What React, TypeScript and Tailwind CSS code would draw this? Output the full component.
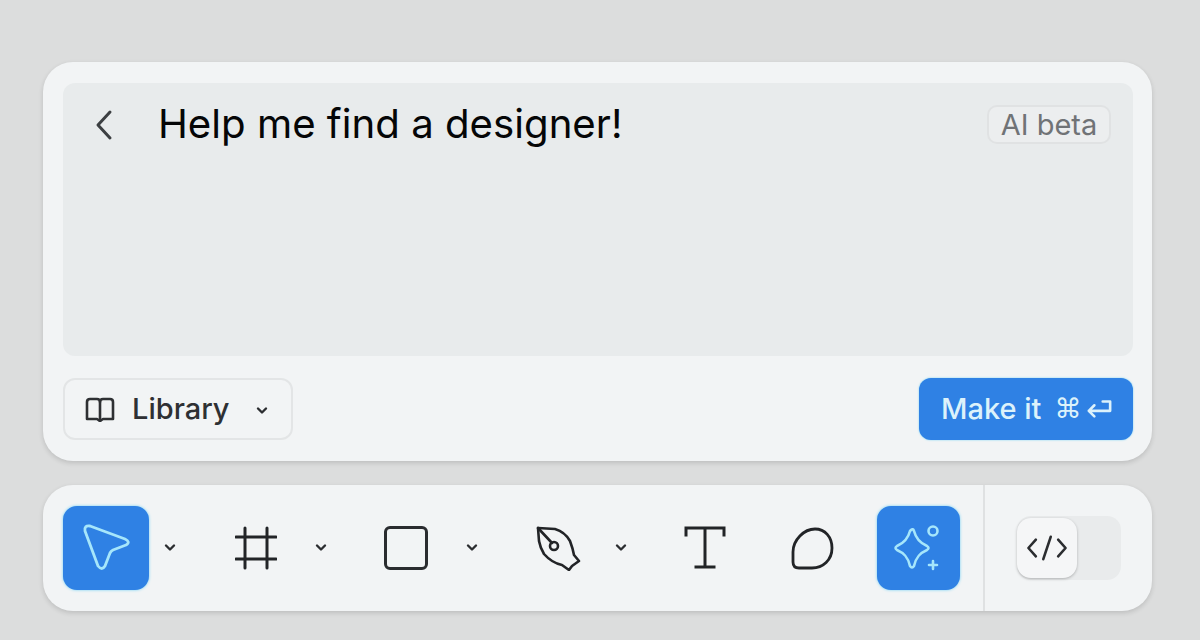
import React from "react";

const Chevron = ({ className = "" }: { className?: string }) => (
  <svg viewBox="0 0 16 12" className={`w-4 h-3 ${className}`} fill="none" stroke="#2b2d30" strokeWidth="2.4" strokeLinecap="round" strokeLinejoin="round">
    <path d="M4 3.5 L8 7.5 L12 3.5" />
  </svg>
);

export default function App() {
  return (
    <div className="w-[1200px] h-[640px] overflow-hidden bg-[#dcdddd] pt-[62px] pl-[43px] font-['Inter','Liberation_Sans',sans-serif]">
      <div className="w-[1109px] h-[399px] rounded-[30px] bg-[#f2f4f5] pl-5 pr-[19px] pt-[21px] flex flex-col shadow-[0_2px_5px_rgba(0,0,0,0.14)]">
        <div className="h-[273px] rounded-[12px] bg-[#e8ebec] flex items-start pl-[31px] pr-[22px] pt-[14px]">
          <svg viewBox="0 0 20 36" className="w-5 h-9 mt-[10px] shrink-0" fill="none" stroke="#3c3f42" strokeWidth="3" strokeLinecap="round" strokeLinejoin="round">
            <path d="M16 5 L4 18 L16 31" />
          </svg>
          <div className="ml-[44px] text-[40.2px] leading-[52px] text-[#050607] h-[52px] mt-[1px]">Help me find a designer!</div>
          <div className="ml-auto mt-[8px] w-[124px] h-[39px] rounded-[10px] border-2 border-[#e0e2e3] bg-[#eceeef] flex items-center justify-center text-[29px] text-[#707376]">AI beta</div>
        </div>
        <div className="mt-[22px] flex justify-between">
          <div className="w-[230px] h-[62px] rounded-[12px] border-2 border-[#e3e5e6] flex items-center pl-[19px]">
            <svg viewBox="0 0 32 26" className="w-[32px] h-[26px] shrink-0" fill="none" stroke="#2e3033" strokeWidth="2.6" strokeLinejoin="round" strokeLinecap="round">
              <path d="M16 6 Q16 3 13 3 H6 Q3 3 3 6 V23 H13 L16 25 L19 23 H29 V6 Q29 3 26 3 H19 Q16 3 16 6 Z" />
              <path d="M16 6 V25" />
            </svg>
            <span className="ml-[16px] text-[29px] font-medium text-[#2e3033]">Library</span>
            <Chevron className="ml-[24px] mt-[3px]" />
          </div>
          <div className="w-[214px] h-[62px] rounded-[12px] bg-[#2f81e4] shadow-[0_0_2px_#6fd0f5] flex items-center pl-[22px]">
            <span className="text-[29px] font-medium text-[#dcf2fb]">Make it</span>
            <span className="ml-[13px] text-[27px] text-[#dcf2fb] font-['DejaVu_Sans',sans-serif]">⌘</span>
            <svg viewBox="0 0 28 22" className="w-[26px] h-[22px] ml-[5px]" fill="none" stroke="#dcf2fb" strokeWidth="2.8" strokeLinecap="round" strokeLinejoin="round">
              <path d="M18 3 H26 V13 H3 M9 7 L3 13 L9 19" />
            </svg>
          </div>
        </div>
      </div>

      <div className="mt-6 w-[1109px] h-[126px] rounded-[30px] bg-[#f2f4f5] flex items-center pl-5 shadow-[0_2px_5px_rgba(0,0,0,0.14)]">
        <div className="w-[86px] h-[84px] rounded-[14px] bg-[#2f81e4] shadow-[0_0_3px_#6fd0f5] flex items-center justify-center shrink-0">
          <svg viewBox="0 0 50 50" className="w-[50px] h-[50px]" fill="none" stroke="#a6e6fb" strokeWidth="2.8" strokeLinejoin="round">
            <path d="M4 8 Q3 2 9 3 L44 16 Q50 19 45 22 L32 27 Q30 28 29 30 L24 43 Q21 48 17 43 Z" />
          </svg>
        </div>
        <Chevron className="ml-[13px] shrink-0" />

        <svg viewBox="0 0 42 44" className="w-[42px] h-[44px] ml-[57px] shrink-0" fill="none" stroke="#222427" strokeWidth="3" strokeLinecap="round">
          <path d="M10 2 V42 M32 2 V42 M1 11 H41 M1 33 H41" />
        </svg>
        <Chevron className="ml-[36px] shrink-0" />

        <div className="ml-[55px] w-[44px] h-[44px] rounded-[6px] border-[3px] border-[#2a2c2f] shrink-0" />
        <Chevron className="ml-[36px] shrink-0" />

        <svg viewBox="0 0 46 46" className="w-[46px] h-[46px] ml-[55px] shrink-0" fill="none" stroke="#222427" strokeWidth="2.6" strokeLinejoin="round" strokeLinecap="round">
          <path d="M3 3 L20 4 Q30 7 35 16 Q38 24 39 30 L44 36 L37 41 L34 45 L27 40 Q17 38 9 29 Q5 22 4 16 Z" />
          <path d="M3 3 L17 18" />
          <circle cx="19" cy="21" r="4" />
        </svg>
        <Chevron className="ml-[32px] shrink-0" />

        <svg viewBox="0 0 42 44" className="w-[42px] h-[44px] ml-[55px] shrink-0" fill="none" stroke="#222427" strokeWidth="3" strokeLinecap="square">
          <path d="M2 9 V2 H40 V9 M21 2 V41 M12 41 H30" />
        </svg>

        <svg viewBox="0 0 44 44" className="w-[44px] h-[44px] ml-[64px] shrink-0" fill="none" stroke="#222427" strokeWidth="2.8" strokeLinejoin="round">
          <path d="M25 3 C35 3 42 11 42 22 C42 34 33 42 22 42 H9 Q3 42 3 36 V26 C3 14 14 3 25 3 Z" />
        </svg>

        <div className="ml-[43px] w-[83px] h-[84px] rounded-[14px] bg-[#2f81e4] shadow-[0_0_3px_#6fd0f5] flex items-center justify-center shrink-0">
          <svg viewBox="0 0 50 50" className="w-[50px] h-[50px]" fill="none" stroke="#a6e6fb" strokeWidth="2.6" strokeLinejoin="round" strokeLinecap="round">
            <path d="M17 7 Q19 5 20 8 C22 16 26 20 33 23 Q36 25 33 27 C26 30 22 34 20 43 Q18 46 16 43 C14 34 10 30 3 27 Q0 25 3 23 C10 20 14 16 16 8 Z" />
            <circle cx="39" cy="8" r="4.5" />
            <path d="M39 38 V46 M35 42 H43" />
          </svg>
        </div>

        <div className="ml-[23px] w-[2px] h-full bg-[#dfe1e2] shrink-0" />

        <div className="ml-[32px] w-[104px] h-[64px] rounded-[14px] bg-[#e9ebec] shrink-0 flex items-center">
          <div className="w-[60px] h-[60px] rounded-[14px] bg-[#f5f6f7] shadow-[0_1px_3px_rgba(0,0,0,0.25)] flex items-center justify-center">
            <svg viewBox="0 0 44 28" className="w-[42px] h-[26px]" fill="none" stroke="#2b2d30" strokeWidth="2.8" strokeLinecap="round" strokeLinejoin="round">
              <path d="M10 5 L2 14 L10 23 M34 5 L42 14 L34 23 M26 2 L18 26" />
            </svg>
          </div>
        </div>
      </div>
    </div>
  );
}
